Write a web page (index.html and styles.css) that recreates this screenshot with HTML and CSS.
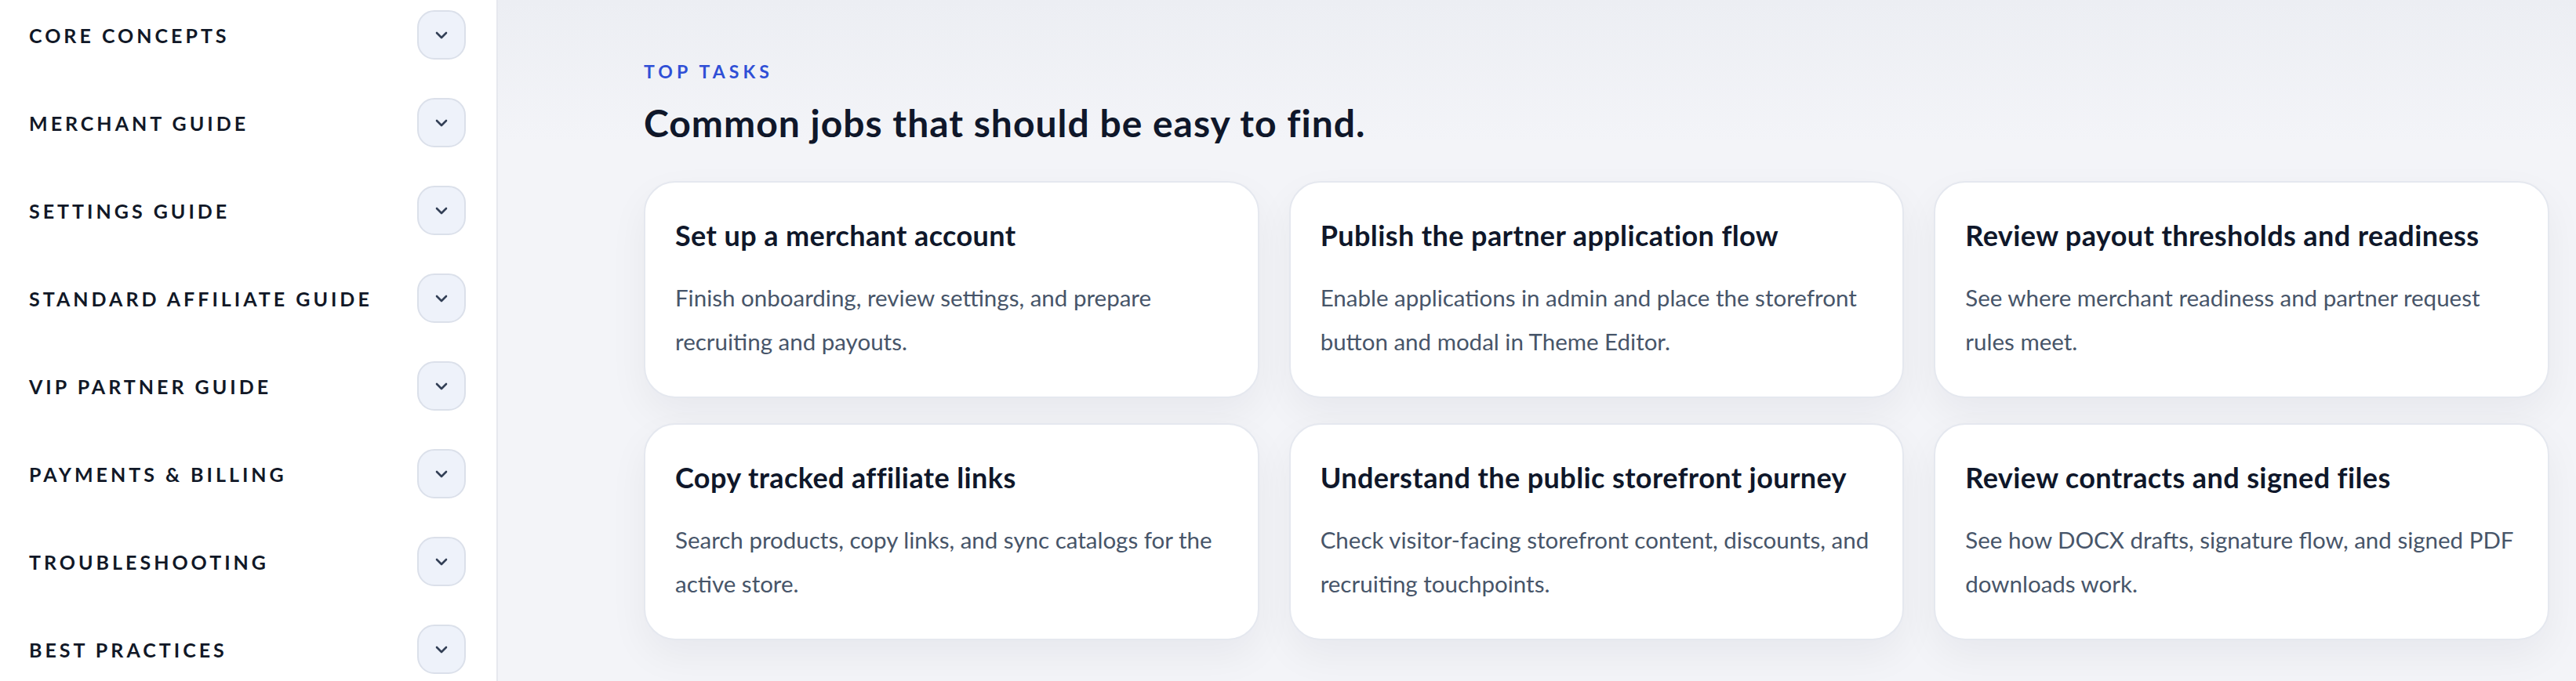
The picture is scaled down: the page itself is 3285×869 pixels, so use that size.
FILE: index.html
```html
<!DOCTYPE html>
<html>

<head>
    <title>Help Center - Top Tasks</title>
    <meta charset="UTF-8">
    <meta name="viewport" content="width=device-width, initial-scale=1.0">
    <link rel="stylesheet" href="styles.css">
</head>

<body>
    <div class="layout">
        <aside class="sidebar">
            <div class="nav-item">
                <span class="nav-label">Core Concepts</span>
                <button class="nav-toggle" aria-label="Expand"><svg viewBox="0 0 24 24"><polyline points="6 9 12 15 18 9"/></svg></button>
            </div>
            <div class="nav-item">
                <span class="nav-label">Merchant Guide</span>
                <button class="nav-toggle" aria-label="Expand"><svg viewBox="0 0 24 24"><polyline points="6 9 12 15 18 9"/></svg></button>
            </div>
            <div class="nav-item">
                <span class="nav-label">Settings Guide</span>
                <button class="nav-toggle" aria-label="Expand"><svg viewBox="0 0 24 24"><polyline points="6 9 12 15 18 9"/></svg></button>
            </div>
            <div class="nav-item">
                <span class="nav-label">Standard Affiliate Guide</span>
                <button class="nav-toggle" aria-label="Expand"><svg viewBox="0 0 24 24"><polyline points="6 9 12 15 18 9"/></svg></button>
            </div>
            <div class="nav-item">
                <span class="nav-label">VIP Partner Guide</span>
                <button class="nav-toggle" aria-label="Expand"><svg viewBox="0 0 24 24"><polyline points="6 9 12 15 18 9"/></svg></button>
            </div>
            <div class="nav-item">
                <span class="nav-label">Payments &amp; Billing</span>
                <button class="nav-toggle" aria-label="Expand"><svg viewBox="0 0 24 24"><polyline points="6 9 12 15 18 9"/></svg></button>
            </div>
            <div class="nav-item">
                <span class="nav-label">Troubleshooting</span>
                <button class="nav-toggle" aria-label="Expand"><svg viewBox="0 0 24 24"><polyline points="6 9 12 15 18 9"/></svg></button>
            </div>
            <div class="nav-item">
                <span class="nav-label">Best Practices</span>
                <button class="nav-toggle" aria-label="Expand"><svg viewBox="0 0 24 24"><polyline points="6 9 12 15 18 9"/></svg></button>
            </div>
        </aside>

        <main class="main">
            <div class="eyebrow">Top Tasks</div>
            <h1 class="section-title">Common jobs that should be easy to find.</h1>

            <div class="task-grid">
                <a class="task-card" href="#">
                    <h3>Set up a merchant account</h3>
                    <p>Finish onboarding, review settings, and prepare recruiting and payouts.</p>
                </a>
                <a class="task-card" href="#">
                    <h3>Publish the partner application flow</h3>
                    <p>Enable applications in admin and place the storefront button and modal in Theme Editor.</p>
                </a>
                <a class="task-card" href="#">
                    <h3>Review payout thresholds and readiness</h3>
                    <p>See where merchant readiness and partner request rules meet.</p>
                </a>
                <a class="task-card" href="#">
                    <h3>Copy tracked affiliate links</h3>
                    <p>Search products, copy links, and sync catalogs for the active store.</p>
                </a>
                <a class="task-card" href="#">
                    <h3>Understand the public storefront journey</h3>
                    <p>Check visitor-facing storefront content, discounts, and recruiting touchpoints.</p>
                </a>
                <a class="task-card" href="#">
                    <h3>Review contracts and signed files</h3>
                    <p>See how DOCX drafts, signature flow, and signed PDF downloads work.</p>
                </a>
            </div>
        </main>
    </div>
</body>

</html>
```

FILE: styles.css
```css
body {
    font-family: Lato, "Noto Sans", sans-serif;
    margin: 0;
    background: #f4f5f9;
    color: #0f172a;
}
.layout {
    display: flex;
    height: 869px;
    overflow: hidden;
}
.sidebar {
    width: 635px;
    flex-shrink: 0;
    background: white;
    border-right: 2px solid #e6e8ee;
    padding: 13px 39px 0 37px;
    box-sizing: border-box;
    display: flex;
    flex-direction: column;
    gap: 49px;
}
.nav-item {
    display: flex;
    align-items: center;
    justify-content: space-between;
    height: 63px;
}
.nav-label {
    font-size: 25px;
    font-weight: 700;
    text-transform: uppercase;
    letter-spacing: 0.16em;
    color: #111827;
}
.nav-toggle {
    width: 62px;
    height: 63px;
    border: 2px solid #dbe0ea;
    border-radius: 22px;
    background: #eef2fa;
    display: flex;
    align-items: center;
    justify-content: center;
    padding: 0;
    cursor: pointer;
}
.nav-toggle svg {
    width: 24px;
    height: 24px;
    fill: none;
    stroke: #334056;
    stroke-width: 2.6;
    stroke-linecap: round;
    stroke-linejoin: round;
}
.main {
    flex: 1;
    padding: 78px 34px 0 186px;
    background: linear-gradient(180deg, #eceef3 0, #f3f4f8 180px, #f3f4f8 100%);
}
.eyebrow {
    font-size: 23px;
    font-weight: 700;
    line-height: 1.2;
    text-transform: uppercase;
    letter-spacing: 0.22em;
    color: #2f4fd6;
}
.section-title {
    font-size: 48px;
    font-weight: 700;
    line-height: 1.2;
    letter-spacing: 1px;
    margin: 22px 0 46px;
    color: #0f172a;
}
.task-grid {
    display: grid;
    grid-template-columns: repeat(3, 1fr);
    column-gap: 38px;
    row-gap: 32px;
}
.task-card {
    display: block;
    background: white;
    border: 2px solid #e5e8ef;
    border-radius: 40px;
    padding: 45px 38px 42px;
    text-decoration: none;
    box-shadow: 0 20px 50px rgba(15, 23, 42, 0.05);
}
.task-card h3 {
    font-size: 36px;
    font-weight: 700;
    line-height: 44px;
    letter-spacing: 0.4px;
    margin: 0 0 30px;
    color: #0f172a;
}
.task-card p {
    font-size: 29.5px;
    line-height: 56px;
    margin: 0;
    color: #475569;
}
```
